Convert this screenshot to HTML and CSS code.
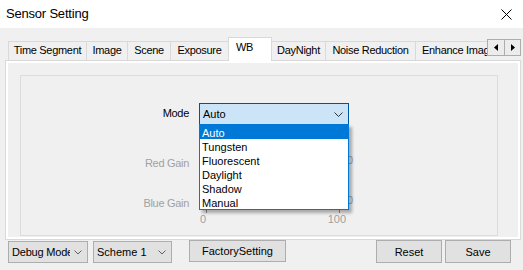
FILE: index.html
```html
<!DOCTYPE html>
<html lang="en">

<head>
    <meta charset="UTF-8">
    <title>Sensor Setting</title>
    <link rel="stylesheet" href="styles.css">
</head>

<body>
    <div class="titlebar">
        <span class="title">Sensor Setting</span>
        <span class="close">
            <svg width="11" height="11" viewBox="0 0 11 11"><path d="M0.5 0.5 L10.5 10.5 M10.5 0.5 L0.5 10.5" stroke="#000" stroke-width="1" fill="none"/></svg>
        </span>
    </div>

    <div class="tabctl">
        <div class="tabhead">
            <div class="tabs">
                <div class="tab tab-time">Time Segment</div>
                <div class="tab tab-image">Image</div>
                <div class="tab tab-scene">Scene</div>
                <div class="tab tab-exposure">Exposure</div>
                <div class="tab tab-wb active">WB</div>
                <div class="tab tab-daynight">DayNight</div>
                <div class="tab tab-noise">Noise Reduction</div>
                <div class="tab tab-enhance">Enhance Image</div>
            </div>
            <div class="scroller">
                <span class="scroll-btn">
                    <svg width="4" height="7" viewBox="0 0 4 7"><path d="M4 0 L0 3.5 L4 7 Z" fill="#000"/></svg>
                </span>
                <span class="scroll-btn scroll-next">
                    <svg width="4" height="7" viewBox="0 0 4 7"><path d="M0 0 L4 3.5 L0 7 Z" fill="#000"/></svg>
                </span>
            </div>
        </div>
        <div class="panel">
            <div class="page">
                <div class="group">
                    <div class="form">
                        <div class="lbl lbl-mode">Mode</div>
                        <div class="combo">
                            <span>Auto</span>
                            <svg width="9" height="5" viewBox="0 0 9 5"><path d="M0.5 0.5 L4.5 4.5 L8.5 0.5" stroke="#333" stroke-width="1" fill="none"/></svg>
                            <div class="list">
                                <div class="opt selected">Auto</div>
                                <div class="opt">Tungsten</div>
                                <div class="opt">Fluorescent</div>
                                <div class="opt">Daylight</div>
                                <div class="opt">Shadow</div>
                                <div class="opt">Manual</div>
                            </div>
                        </div>

                        <div class="lbl lbl-gain row-red">Red Gain</div>
                        <div class="track row-red"></div>
                        <div class="value row-red">0</div>

                        <div class="lbl lbl-gain row-blue">Blue Gain</div>
                        <div class="track row-blue">
                            <span class="tick"></span>
                            <span class="tick"></span>
                        </div>
                        <div class="value row-blue">0</div>

                        <div class="scale">
                            <span>0</span>
                            <span>100</span>
                        </div>
                    </div>
                </div>
            </div>
        </div>
    </div>

    <div class="bottombar">
        <div class="dd dd-debug">
            <span class="dd-text">Debug Mode</span>
            <svg width="8" height="5" viewBox="0 0 8 5"><path d="M0.5 0.5 L4 4 L7.5 0.5" stroke="#606060" stroke-width="1" fill="none"/></svg>
        </div>
        <div class="dd dd-scheme">
            <span class="dd-text">Scheme 1</span>
            <svg width="8" height="5" viewBox="0 0 8 5"><path d="M0.5 0.5 L4 4 L7.5 0.5" stroke="#606060" stroke-width="1" fill="none"/></svg>
        </div>
        <button class="btn btn-factory">FactorySetting</button>
        <button class="btn btn-reset">Reset</button>
        <button class="btn btn-save">Save</button>
    </div>
</body>

</html>
```

FILE: styles.css
```css
* {
    box-sizing: border-box;
}

html, body {
    margin: 0;
    padding: 0;
}

body {
    width: 523px;
    height: 270px;
    overflow: hidden;
    background: #f0f0f0;
    font-family: 'Liberation Sans', Arial, sans-serif;
    font-size: 11px;
    line-height: 13px;
    color: #000;
}

.titlebar {
    height: 28px;
    background: #fff;
    display: flex;
    align-items: center;
    justify-content: space-between;
    padding: 0 11px 0 6px;
}

.title {
    font-size: 13px;
    line-height: 15px;
    letter-spacing: -0.2px;
    padding-bottom: 2px;
}

.close {
    display: flex;
}

/* tab control */
.tabctl {
    margin-left: 5px;
    width: 516px;
}

.tabhead {
    height: 33px;
    margin-bottom: -1px;
    padding-left: 3px;
    display: flex;
    position: relative;
    z-index: 1;
}

.tabs {
    width: 480px;
    display: flex;
    align-items: flex-end;
    overflow: hidden;
}

.tab {
    flex: none;
    height: 19px;
    margin-bottom: 1px;
    margin-right: -1px;
    padding-top: 2px;
    border: 1px solid #d9d9d9;
    border-bottom: none;
    background: #f0f0f0;
    text-align: center;
    white-space: nowrap;
    overflow: hidden;
    letter-spacing: -0.3px;
}

.tab.active {
    height: 24px;
    margin-bottom: 0;
    padding-top: 3px;
    background: #fff;
    position: relative;
    z-index: 1;
}

.tab-time { width: 79px; }
.tab-image { width: 42px; }
.tab-scene { width: 44px; }
.tab-exposure { width: 59px; }
.tab-wb { width: 44px; text-align: left; padding-left: 7px; }
.tab-daynight { width: 55px; }
.tab-noise { width: 91px; }
.tab-enhance { width: 84px; text-align: left; padding-left: 6px; }

.scroller {
    display: flex;
    margin-top: 11px;
    height: 17px;
}

.scroll-btn {
    width: 18px;
    height: 17px;
    border: 1px solid #adadad;
    background: #ececec;
    display: flex;
    align-items: center;
    justify-content: center;
}

.scroll-next {
    width: 17px;
    margin-left: -1px;
}

.panel {
    height: 180px;
    border: 1px solid #d9d9d9;
    background: #fff;
    padding: 2px;
}

.page {
    height: 174px;
    background: #f0f0f0;
    padding: 12px 0 0 12px;
}

.group {
    width: 478px;
    height: 161px;
    border: 1px solid #dcdcdc;
    padding-top: 27px;
}

/* WB form */
.form {
    display: grid;
    grid-template-columns: 178px 150px 40px;
    grid-template-rows: 22px 24px 26px 14px 24px 13px;
}

.lbl {
    grid-column: 1;
    text-align: right;
    padding-right: 10px;
    letter-spacing: -0.3px;
}

.lbl-mode {
    grid-row: 1;
    padding-top: 4px;
}

.lbl-gain {
    padding-top: 8px;
    color: #a0a0a0;
}

.row-red { grid-row: 3; }
.row-blue { grid-row: 5; }

.combo {
    grid-row: 1;
    grid-column: 2;
    position: relative;
    display: flex;
    align-items: center;
    justify-content: space-between;
    padding: 1px 5px 0 3px;
    border: 1px solid #005499;
    background: #cce4f7;
}

.list {
    position: absolute;
    top: 20px;
    left: -1px;
    width: 150px;
    border: 1px solid #0078d7;
    background: #fff;
    box-shadow: 3px 3px 3px rgba(0, 0, 0, 0.3);
    z-index: 2;
}

.opt {
    height: 14px;
    line-height: 16px;
    padding-left: 2px;
}

.opt.selected {
    background: #0078d7;
    color: #fff;
}

.track {
    grid-column: 2;
    display: flex;
    align-items: flex-end;
    justify-content: space-between;
    padding: 0 9px 0 7px;
}

.tick {
    width: 1px;
    height: 3px;
    background: #8c8c8c;
}

.value {
    grid-column: 3;
    margin-left: -2px;
    padding-top: 5px;
    color: #a0a0a0;
}

.scale {
    grid-row: 6;
    grid-column: 2;
    display: flex;
    justify-content: space-between;
    padding: 0 3px 0 1px;
    color: #a0a0a0;
}

/* bottom bar */
.bottombar {
    display: flex;
    align-items: flex-start;
    padding: 0 12px 0 8px;
}

.dd {
    margin-top: 1px;
    height: 22px;
    border: 1px solid #adadad;
    background: #e1e1e1;
    display: flex;
    align-items: center;
    padding: 0 5px 0 3px;
}

.dd svg {
    flex: none;
    margin-left: auto;
}

.dd-text {
    white-space: nowrap;
    overflow: hidden;
}

.dd-debug {
    width: 80px;
}

.dd-debug .dd-text {
    width: 58px;
    letter-spacing: -0.2px;
}

.dd-scheme {
    width: 79px;
    margin-left: 5px;
}

.btn {
    height: 23px;
    border: 1px solid #adadad;
    background: #e1e1e1;
    font-family: inherit;
    font-size: 11px;
    color: #000;
    padding: 0;
}

.btn-factory {
    width: 97px;
    height: 22px;
    margin-left: 17px;
}

.btn-reset {
    width: 66px;
    margin-left: auto;
}

.btn-save {
    width: 66px;
    margin-left: 3px;
}
```
